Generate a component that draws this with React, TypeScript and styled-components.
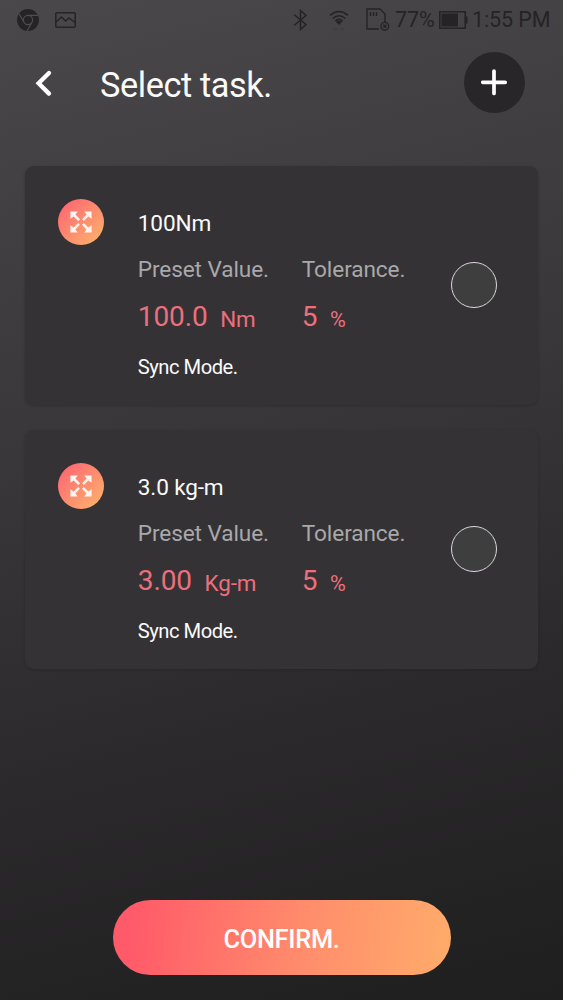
import React from "react";
import styled, { createGlobalStyle } from "styled-components";

const GlobalStyle = createGlobalStyle`
  * { box-sizing: border-box; }
  body { margin: 0; background: #2b2a2b; }
`;

const Screen = styled.div`
  display: flex;
  flex-direction: column;
  width: 563px;
  height: 1000px;
  overflow: hidden;
  font-family: Roboto, "Liberation Sans", sans-serif;
  color: #fafafa;
  background: linear-gradient(166deg, #4a484b 0%, #413f42 20%, #383638 43%, #2b292b 70%, #242324 88%, #201f20 100%);
`;

const StatusBar = styled.div`
  display: flex;
  align-items: center;
  justify-content: space-between;
  height: 39px;
  padding: 0 14px 0 16px;
  color: #252326;
`;

const StatusGroup = styled.div`
  display: flex;
  align-items: center;
`;

const StatusIcon = styled.svg<{ $gap?: number }>`
  display: block;
  flex: none;
  fill: none;
  stroke: currentColor;
  margin-right: ${({ $gap }) => $gap ?? 0}px;
`;

const StatusText = styled.span<{ $width: number }>`
  width: ${({ $width }) => $width}px;
  font-size: 21.5px;
  letter-spacing: -0.1px;
  line-height: 40px;
  white-space: nowrap;
`;

const Header = styled.header`
  display: flex;
  align-items: center;
  height: 87px;
  padding: 0 38px 0 34px;
`;

const BackButton = styled.button`
  width: 66px;
  height: 40px;
  padding: 0;
  border: 0;
  background: none;
  color: #fff;
  svg { display: block; }
`;

const Title = styled.h1`
  flex: 1;
  margin: 5px 0 0;
  font-size: 34.3px;
  letter-spacing: -0.4px;
  line-height: 46px;
  font-weight: 400;
`;

const AddButton = styled.button`
  display: grid;
  place-items: center;
  width: 61px;
  height: 61px;
  padding: 0;
  border: 0;
  border-radius: 50%;
  background: #282629;
`;

const TaskList = styled.main`
  display: flex;
  flex: 1;
  flex-direction: column;
  gap: 24.5px;
  padding: 40px 25px 0;
`;

const Card = styled.article`
  display: flex;
  align-items: center;
  height: 239px;
  padding: 0 41px 0 33px;
  border-radius: 9px;
  background: #343235;
  box-shadow: 0 1px 3px rgba(30, 28, 30, 0.35);
`;

const Badge = styled.div`
  display: grid;
  place-items: center;
  align-self: flex-start;
  width: 46px;
  height: 46px;
  margin-top: 33px;
  border-radius: 50%;
  background: linear-gradient(135deg, #fd6872 10%, #fdb36c 95%);
`;

const Details = styled.div`
  flex: 1;
  align-self: flex-start;
  padding: 34px 0 0 33.8px;
  white-space: nowrap;
`;

const Name = styled.h2`
  margin: 0;
  font-size: 22.6px;
  letter-spacing: -0.15px;
  line-height: 47px;
  font-weight: 400;
`;

const Pair = styled.div`
  display: grid;
  grid-template-columns: 164px 1fr;
`;

const Label = styled.div`
  height: 46px;
  color: #a9a8aa;
  font-size: 22.6px;
  letter-spacing: -0.1px;
  line-height: 45.6px;
`;

const Value = styled.div`
  display: flex;
  align-items: baseline;
  gap: 12.5px;
  height: 47px;
  color: #ec6f7b;
  font-size: 28px;
  letter-spacing: -0.1px;
  line-height: 47px;
`;

const Unit = styled.span<{ $size: number }>`
  font-size: ${({ $size }) => $size}px;
  line-height: 44px;
  transform: translateY(1.4px);
`;

const Mode = styled.div`
  font-size: 20.2px;
  letter-spacing: -0.5px;
  line-height: 54px;
`;

const Radio = styled.button`
  width: 46px;
  height: 46px;
  margin-bottom: 1px;
  padding: 0;
  border: 1px solid #d9d8da;
  border-radius: 50%;
  background: #3f3e3f;
`;

const Footer = styled.footer`
  display: flex;
  justify-content: center;
  padding-bottom: 25px;
`;

const ConfirmButton = styled.button`
  width: 338px;
  height: 75px;
  padding: 2px 0 0;
  border: 0;
  border-radius: 38px;
  color: #fff;
  font: 500 25.4px/72px Roboto, "Liberation Sans", sans-serif;
  letter-spacing: -0.3px;
  background: linear-gradient(97deg, #ff5a69 6%, #ff8e6c 58%, #ffaa6b 97%);
`;

const ExpandIcon = () => (
  <svg width="24" height="24" viewBox="0 0 24 24" fill="#fff4ee">
    {[0, 90, 180, 270].map((angle) => (
      <path
        key={angle}
        transform={`rotate(${angle} 12 12)`}
        d="M1.4 1.4h7.4L6.5 4.6l4.5 4.6-1.7 1.7-4.7-4.5-3.2 2.3z"
      />
    ))}
  </svg>
);

interface Task {
  name: string;
  value: string;
  unit: string;
  tolerance: string;
}

const tasks: Task[] = [
  { name: "100Nm", value: "100.0", unit: "Nm", tolerance: "5" },
  { name: "3.0 kg-m", value: "3.00", unit: "Kg-m", tolerance: "5" },
];

const TaskCard = ({ task }: { task: Task }) => (
  <Card>
    <Badge><ExpandIcon /></Badge>
    <Details>
      <Name>{task.name}</Name>
      <Pair>
        <Label>Preset Value.</Label>
        <Label>Tolerance.</Label>
        <Value>{task.value}<Unit $size={22.4}>{task.unit}</Unit></Value>
        <Value>{task.tolerance}<Unit $size={21.6}>%</Unit></Value>
      </Pair>
      <Mode>Sync Mode.</Mode>
    </Details>
    <Radio aria-label={`Select ${task.name}`} />
  </Card>
);

export default function App() {
  return (
    <>
      <GlobalStyle />
      <Screen>
        <StatusBar>
          <StatusGroup>
            <StatusIcon $gap={15} width="24" height="24" viewBox="0 0 24 24">
              <circle cx="12" cy="12" r="11" fill="currentColor" stroke="none" />
              <circle cx="12" cy="12" r="4.6" stroke="#504e51" strokeWidth="1.1" />
              <path d="M12 7.4h10M8 14.3L3 5.7M16 14.3l-5 8.7" stroke="#504e51" strokeWidth="1.1" />
            </StatusIcon>
            <StatusIcon width="21" height="16" viewBox="0 0 21 16" strokeWidth="1.5">
              <rect x="0.8" y="0.8" width="19.4" height="14.4" rx="1" />
              <path d="M1 10l5.5-5 4 4 3.5-3 6 4.5" />
            </StatusIcon>
          </StatusGroup>
          <StatusGroup>
            <StatusIcon $gap={21} width="15" height="22" viewBox="0 0 15 22" strokeWidth="1.5">
              <path d="M1 5.5l12 10-5.5 5V1.5l5.5 5-12 10" />
            </StatusIcon>
            <StatusIcon $gap={17} width="20" height="22" viewBox="0 0 20 22" strokeWidth="1.5">
              <path d="M1 6.3q9-7.5 18 0M3.6 9.5q6.4-5.5 12.8 0M6.2 12q3.8-3.2 7.6 0" />
              <path d="M6.8 12.7q3.2-2 6.4 0L10 16z" fill="currentColor" stroke="none" />
              <path d="M4.5 20h4M11 20h4" strokeWidth="1" opacity=".35" />
            </StatusIcon>
            <StatusIcon $gap={5} width="24" height="23" viewBox="0 0 24 23" strokeWidth="1.4">
              <path d="M13 21H1V1h13l5 5v9M4.5 4v4M7.5 4v4M10.5 4v4" />
              <circle cx="18.8" cy="18.3" r="3.9" />
              <path d="M17.3 16.8l3 3M20.3 16.8l-3 3" strokeWidth="1.5" />
            </StatusIcon>
            <StatusText $width={44}>77%</StatusText>
            <StatusIcon $gap={4} width="29" height="18" viewBox="0 0 29 18" strokeWidth="1.6">
              <path d="M.8.8h25.4v16.4H.8z" />
              <path d="M2.5 2.5H19v13H2.5zM26.5 5.5h2v7h-2z" fill="currentColor" stroke="none" />
            </StatusIcon>
            <StatusText $width={77}>1:55 PM</StatusText>
          </StatusGroup>
        </StatusBar>
        <Header>
          <BackButton aria-label="Back">
            <svg width="20" height="40" viewBox="0 0 20 40" fill="none" stroke="currentColor" strokeWidth="4.3" strokeLinecap="round">
              <path d="M15 10L4.6 20.3 15 30.6" />
            </svg>
          </BackButton>
          <Title>Select task.</Title>
          <AddButton aria-label="Add task">
            <svg width="27" height="27" viewBox="0 0 27 27" stroke="#fff" strokeWidth="3.7" strokeLinecap="round">
              <path d="M13 2v22.5M1.8 13.3h22.4" />
            </svg>
          </AddButton>
        </Header>
        <TaskList>
          {tasks.map((task) => <TaskCard key={task.name} task={task} />)}
        </TaskList>
        <Footer>
          <ConfirmButton>CONFIRM.</ConfirmButton>
        </Footer>
      </Screen>
    </>
  );
}
